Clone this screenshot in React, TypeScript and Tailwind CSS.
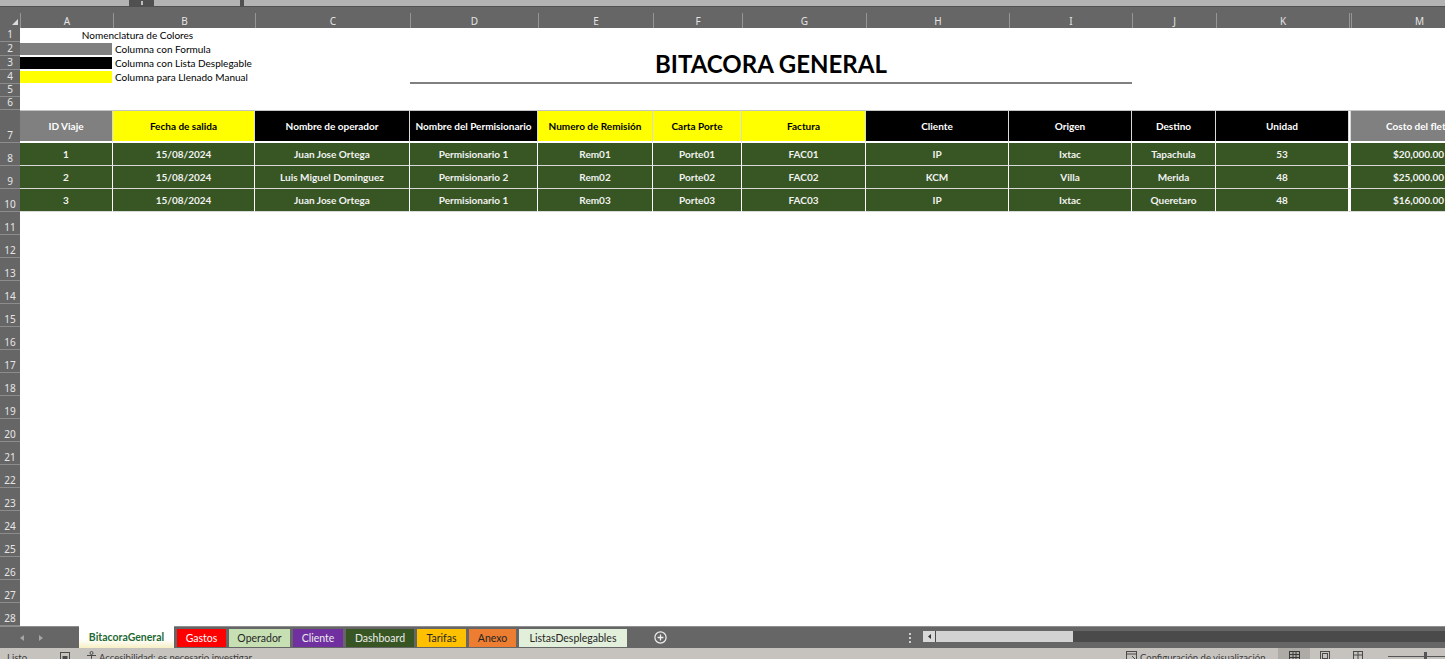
import React from "react";

const GRID =
  "grid w-[1487px] shrink-0 grid-cols-[20px_93px_142px_155px_128px_115px_89px_124px_143px_123px_84px_133px_2px_136px]";

const LETTERS = ["A", "B", "C", "D", "E", "F", "G", "H", "I", "J", "K", "", "M"];

const YELLOW = "bg-[#ffff00] text-black";
const BLACK = "bg-black text-white";
const GRAY = "bg-[#808080] text-white";

const HEADERS = [
  { label: "ID Viaje", cls: GRAY },
  { label: "Fecha de salida", cls: YELLOW },
  { label: "Nombre de operador", cls: BLACK },
  { label: "Nombre del Permisionario", cls: BLACK },
  { label: "Numero de Remisión", cls: YELLOW },
  { label: "Carta Porte", cls: YELLOW },
  { label: "Factura", cls: YELLOW },
  { label: "Cliente", cls: BLACK },
  { label: "Origen", cls: BLACK },
  { label: "Destino", cls: BLACK },
  { label: "Unidad", cls: BLACK },
  { label: "", cls: "bg-white" },
  { label: "Costo del flete", cls: GRAY },
];

const TRIPS = [
  ["1", "15/08/2024", "Juan Jose Ortega", "Permisionario 1", "Rem01", "Porte01", "FAC01", "IP", "Ixtac", "Tapachula", "53", "", "$20,000.00"],
  ["2", "15/08/2024", "Luis Miguel Dominguez", "Permisionario 2", "Rem02", "Porte02", "FAC02", "KCM", "Villa", "Merida", "48", "", "$25,000.00"],
  ["3", "15/08/2024", "Juan Jose Ortega", "Permisionario 1", "Rem03", "Porte03", "FAC03", "IP", "Ixtac", "Queretaro", "48", "", "$16,000.00"],
];

const TABS = [
  { name: "BitacoraGeneral", cls: "w-[95px]", active: true },
  { name: "Gastos", cls: "w-[49px] bg-[#ff0000] text-white" },
  { name: "Operador", cls: "w-[61px] bg-[#c6e0b4] text-[#262626]" },
  { name: "Cliente", cls: "w-[50px] bg-[#7030a0] text-[#ececec]" },
  { name: "Dashboard", cls: "w-[68px] bg-[#375623] text-[#ececec]" },
  { name: "Tarifas", cls: "w-[49px] bg-[#ffc000] text-[#262626]" },
  { name: "Anexo", cls: "w-[47px] bg-[#ed7d31] text-[#262626]" },
  { name: "ListasDesplegables", cls: "w-[108px] bg-[#e2efda] text-[#262626]" },
];

function RowNum({ n, className = "" }: { n: number; className?: string }) {
  return (
    <div
      className={`flex items-end justify-center border-b border-[#8c8c8c] bg-[#666666] pb-px font-['Noto_Sans',sans-serif] text-[10px] leading-[11px] text-[#e6e6e6] ${className}`}
    >
      {n}
    </div>
  );
}

function FormulaStrip() {
  return (
    <div className="flex h-[7px] w-[1445px] shrink-0 items-start bg-[#505050]">
      <div className="h-[6px] w-[129px] bg-[#b3b3b3]" />
      <div className="flex h-[6px] w-[25px] justify-center">
        <span className="mt-px h-[4px] w-[2px] bg-[#bdbdbd]" />
      </div>
      <div className="h-[6px] w-[86px] bg-[#b3b3b3]" />
      <div className="w-[4px]" />
      <div className="h-[6px] flex-1 bg-[#b3b3b3]" />
    </div>
  );
}

function ColumnHeaders() {
  return (
    <>
      <div className="h-[6px] w-[1445px] shrink-0 bg-[#666666]" />
      <div className={`${GRID} h-[15px] bg-[#666666] font-['Noto_Sans',sans-serif] text-[10px] text-[#e4e4e4]`}>
        <div className="relative">
          <svg className="absolute bottom-[3px] right-[2px]" width="6" height="6">
            <polygon points="6,0 6,6 0,6" fill="#dcdcdc" />
          </svg>
        </div>
        {LETTERS.map((l, i) => (
          <div key={i} className="flex items-center justify-center border-l border-[#959595] leading-none">
            {l}
          </div>
        ))}
      </div>
    </>
  );
}

function TopRows() {
  return (
    <div className={`${GRID} grid-rows-[14px_14px_14px_14px_13px_13px] text-[10px] leading-none text-black`}>
      <div className="col-start-1 row-start-1 row-span-6 flex flex-col">
        <RowNum n={1} className="h-[14px]" />
        <RowNum n={2} className="h-[14px]" />
        <RowNum n={3} className="h-[14px]" />
        <RowNum n={4} className="h-[14px]" />
        <RowNum n={5} className="h-[13px]" />
        <RowNum n={6} className="h-[13px]" />
      </div>
      <div className="col-start-2 col-span-2 row-start-1 flex items-center justify-center">Nomenclatura de Colores</div>
      <div className="col-start-2 row-start-2 my-px mr-px bg-[#808080]" />
      <div className="col-start-3 row-start-2 flex items-center whitespace-nowrap pl-[2px]">Columna con Formula</div>
      <div className="col-start-2 row-start-3 my-px mr-px bg-black" />
      <div className="col-start-3 row-start-3 flex items-center whitespace-nowrap pl-[2px]">Columna con Lista Desplegable</div>
      <div className="col-start-2 row-start-4 my-px mr-px bg-[#ffff00]" />
      <div className="col-start-3 row-start-4 flex items-center whitespace-nowrap pl-[2px]">Columna para Llenado Manual</div>
      <div className="col-start-5 col-span-6 row-start-1 row-span-4 flex items-end justify-center border-b-2 border-[#808080] pb-[6px] text-[24px] font-bold leading-none">
        BITACORA GENERAL
      </div>
    </div>
  );
}

function TableHeader() {
  return (
    <div className={`${GRID} h-[33px]`}>
      <RowNum n={7} />
      {HEADERS.map((h, i) => (
        <div
          key={i}
          className={`${h.cls} flex items-center justify-center whitespace-nowrap border-r border-b-2 border-t border-r-[#d9d9d9] border-b-white border-t-[#c4c4c4] text-[10px] font-bold leading-none`}
        >
          {h.label}
        </div>
      ))}
    </div>
  );
}

function TripRow({ n, cells }: { n: number; cells: string[] }) {
  return (
    <div className={`${GRID} h-[23px]`}>
      <RowNum n={n} />
      {cells.map((c, i) =>
        i === 11 ? (
          <div key={i} className="border-b border-[#d9d9d9] bg-white" />
        ) : (
          <div
            key={i}
            className="flex items-center justify-center whitespace-nowrap border-b border-r border-b-[#d9d9d9] border-r-white bg-[#375623] text-[10px] font-bold leading-none text-[#f2f2f2]"
          >
            {c}
          </div>
        )
      )}
    </div>
  );
}

function SheetTabs() {
  return (
    <div className="flex h-[22px] w-[1445px] shrink-0 border-t border-[#8e8e8e] bg-[#666666] text-[10.5px] leading-none">
      <div className="flex w-[79px] shrink-0 items-center gap-[15px] pl-[20px]">
        <svg width="4" height="6">
          <polygon points="4,0 4,6 0,3" fill="#a6a6a6" />
        </svg>
        <svg width="4" height="6">
          <polygon points="0,0 0,6 4,3" fill="#a6a6a6" />
        </svg>
      </div>
      <div className="flex shrink-0 items-start gap-[3px]">
        {TABS.map((t) =>
          t.active ? (
            <div
              key={t.name}
              className={`${t.cls} -mt-px flex h-[22px] items-center justify-center bg-linear-to-b from-white from-60% to-[#f6efc4] font-bold text-[#1f6a34]`}
            >
              {t.name}
            </div>
          ) : (
            <div key={t.name} className={`${t.cls} mt-[2px] flex h-[18px] items-center justify-center`}>
              {t.name}
            </div>
          )
        )}
      </div>
      <div className="ml-[27px] flex h-full w-[13px] shrink-0 items-center">
        <svg width="13" height="13" viewBox="0 0 13 13">
          <circle cx="6.5" cy="6.5" r="5.6" fill="none" stroke="#f0f0f0" strokeWidth="1.2" />
          <path d="M6.5 3.6v5.8M3.6 6.5h5.8" stroke="#f0f0f0" strokeWidth="1.3" />
        </svg>
      </div>
      <div className="ml-[241px] flex h-full w-[4px] shrink-0 flex-col items-center justify-center gap-[2px]">
        <span className="h-[2px] w-[2px] bg-[#d0d0d0]" />
        <span className="h-[2px] w-[2px] bg-[#d0d0d0]" />
        <span className="h-[2px] w-[2px] bg-[#d0d0d0]" />
      </div>
      <div className="ml-[11px] mt-[4px] flex h-[11px] flex-1 bg-[#4a4a4a]">
        <div className="flex w-[12px] items-center justify-center bg-[#d9d9d9]">
          <svg width="3" height="5">
            <polygon points="3,0 3,5 0,2.5" fill="#333333" />
          </svg>
        </div>
        <div className="ml-px w-[137px] bg-[#d3d3d3]" />
      </div>
    </div>
  );
}

function StatusBar() {
  return (
    <div className="flex h-[20px] w-[1445px] shrink-0 items-start bg-[#c6c3bf] pt-[4px] text-[9.5px] leading-[11px] text-[#3a3a3a]">
      <span className="w-[53px] shrink-0 pl-[7px]">Listo</span>
      <svg className="ml-[7px] shrink-0" width="10" height="10" viewBox="0 0 10 10">
        <rect x="0.5" y="0.5" width="9" height="9" fill="none" stroke="#4a4a4a" />
        <rect x="2.5" y="4" width="5" height="3" fill="#4a4a4a" />
      </svg>
      <svg className="ml-[16px] -mt-px shrink-0" width="11" height="11" viewBox="0 0 11 11">
        <circle cx="5.5" cy="2" r="1.5" fill="none" stroke="#4a4a4a" />
        <path d="M1 4.5h9M5.5 4.5v3M5.5 7.5l-2 3M5.5 7.5l2 3" stroke="#4a4a4a" fill="none" />
      </svg>
      <span className="ml-[2px] whitespace-nowrap">Accesibilidad: es necesario investigar</span>
      <div className="flex-1" />
      <div className="-mt-[4px] flex h-[20px] w-[319px] shrink-0 items-start">
        <svg className="mt-[3px] shrink-0" width="11" height="11" viewBox="0 0 11 11">
          <rect x="0.5" y="0.5" width="10" height="9" fill="none" stroke="#4a4a4a" />
          <path d="M0.5 3h10M6 5l3 3" stroke="#4a4a4a" />
        </svg>
        <span className="ml-[3px] mt-[4px] w-[124px] shrink-0 whitespace-nowrap">Configuración de visualización</span>
        <div className="ml-[14px] flex h-full w-[32px] shrink-0 justify-center bg-[#aeaba7] pt-[3px]">
          <svg width="11" height="10" viewBox="0 0 11 10">
            <rect x="0.5" y="0.5" width="10" height="9" fill="none" stroke="#3a3a3a" />
            <path d="M0.5 3.5h10M0.5 6.5h10M4 0.5v9M7 0.5v9" stroke="#3a3a3a" />
          </svg>
        </div>
        <svg className="ml-[10px] mt-[3px] shrink-0" width="10" height="10" viewBox="0 0 10 10">
          <rect x="0.5" y="0.5" width="9" height="9" fill="none" stroke="#4a4a4a" />
          <rect x="2.5" y="2.5" width="5" height="5" fill="none" stroke="#4a4a4a" />
        </svg>
        <svg className="ml-[23px] mt-[3px] shrink-0" width="10" height="10" viewBox="0 0 10 10">
          <rect x="0.5" y="0.5" width="9" height="9" fill="none" stroke="#4a4a4a" />
          <path d="M5 0.5v9M0.5 4h9" stroke="#4a4a4a" />
        </svg>
        <div className="relative ml-[25px] mt-[8px] h-px w-[57px] shrink-0 bg-[#555555]">
          <span className="absolute -top-[4px] left-[36px] h-[9px] w-[3px] bg-[#555555]" />
        </div>
      </div>
    </div>
  );
}

export default function App() {
  const empty = Array.from({ length: 18 }, (_, i) => i + 11);
  return (
    <div className="flex h-[659px] w-[1445px] flex-col overflow-hidden bg-white font-['Lato',sans-serif]">
      <FormulaStrip />
      <ColumnHeaders />
      <TopRows />
      <TableHeader />
      {TRIPS.map((t, i) => (
        <TripRow key={i} n={i + 8} cells={t} />
      ))}
      {empty.map((n) => (
        <div key={n} className="flex h-[23px] shrink-0">
          <RowNum n={n} className="w-[20px]" />
        </div>
      ))}
      <SheetTabs />
      <StatusBar />
    </div>
  );
}
